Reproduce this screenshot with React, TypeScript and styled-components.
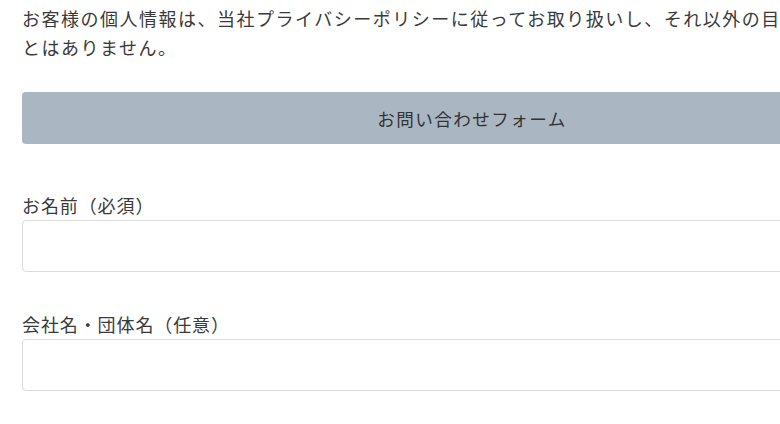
import styled, { createGlobalStyle } from "styled-components";

// global
const GlobalStyle = createGlobalStyle`
  html, body {
    margin: 0;
    padding: 0;
    background: #fff;
    overflow: hidden;
  }
  body {
    font-family: "Noto Sans CJK JP", "Noto Sans", sans-serif;
    color: #333;
  }
`;

// styled
const Page = styled.main`
  width: 900px;
  padding: 4px 0 0 22px;
`;

const Notice = styled.p`
  margin: 0 0 30px;
  font-size: 18px;
  line-height: 29px;
  letter-spacing: 1.5px;
  color: #3a3a3a;
`;

const FormTitle = styled.div`
  display: flex;
  justify-content: center;
  align-items: center;
  height: 52px;
  margin-bottom: 47px;
  background-color: #aab6c2;
  border-radius: 4px;
  font-size: 17.6px;
  letter-spacing: 0.08em;
  color: #333;
`;

const Field = styled.div`
  display: flex;
  flex-direction: column;
  margin-bottom: 38px;
`;

const Label = styled.label`
  font-size: 18px;
  line-height: 29px;
  letter-spacing: 0.05em;
  color: #3a3a3a;
`;

const Input = styled.input`
  box-sizing: border-box;
  width: 100%;
  height: 52px;
  padding: 0 12px;
  border: 1px solid #dcdcdc;
  border-radius: 4px;
  background: #fff;
  font-family: inherit;
  font-size: 16px;
  outline: none;
`;

const fields = [
  { id: "name", label: "お名前（必須）" },
  { id: "company", label: "会社名・団体名（任意）" },
];

function App(): JSX.Element {
  return (
    <>
      <GlobalStyle />
      <Page>
        <Notice>
          お客様の個人情報は、当社プライバシーポリシーに従ってお取り扱いし、それ以外の目的で使用することはありません。
        </Notice>
        <FormTitle>お問い合わせフォーム</FormTitle>
        {fields.map((f) => (
          <Field key={f.id}>
            <Label htmlFor={f.id}>{f.label}</Label>
            <Input id={f.id} type="text" />
          </Field>
        ))}
      </Page>
    </>
  );
}

export default App;
